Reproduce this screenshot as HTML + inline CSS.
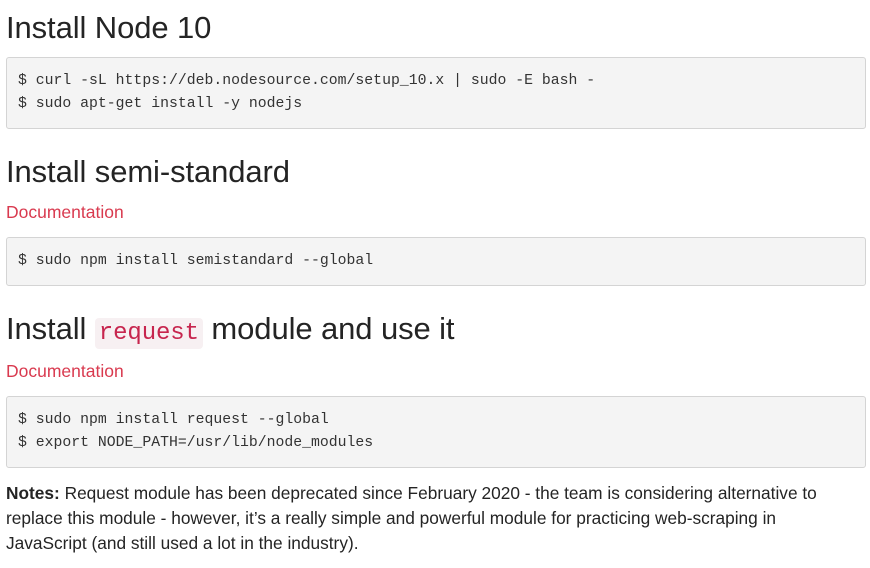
<!DOCTYPE html>
<html><head><meta charset="utf-8"><style>
body{margin:0;background:#fff;width:870px;height:568px;overflow:hidden;font-family:"Liberation Sans",sans-serif;color:#242424}
.h{position:absolute;left:6px;font-size:31px;line-height:34px;color:#242424;white-space:nowrap;letter-spacing:-0.1px}
.box{position:absolute;left:6px;width:860px;background:#f4f4f4;border:1px solid #d4d4d4;border-radius:3px;box-sizing:border-box}
.code{position:absolute;left:18px;font-family:"Liberation Mono",monospace;font-size:14.8px;line-height:23px;color:#333;white-space:pre}
.doc{position:absolute;left:6px;font-size:17.5px;color:#d93a4f;line-height:20px}
.ic{font-family:"Liberation Mono",monospace;color:#c7254e;background:#f7f0f2;border-radius:4px;padding:2px 4px;font-size:24px}
.notes{position:absolute;left:6px;top:481px;width:850px;font-size:17.3px;line-height:25px;color:#242424}
</style></head><body>
<div class="h" style="top:11px">Install Node 10</div>
<div class="box" style="top:57px;height:72px"></div>
<div class="code" style="top:70px">$ curl -sL https://deb.nodesource.com/setup_10.x | sudo -E bash -
$ sudo apt-get install -y nodejs</div>
<div class="h" style="top:155px">Install semi-standard</div>
<div class="doc" style="top:202px">Documentation</div>
<div class="box" style="top:237px;height:49px"></div>
<div class="code" style="top:250px">$ sudo npm install semistandard --global</div>
<div class="h" style="top:312px">Install <span class="ic">request</span> module and use it</div>
<div class="doc" style="top:361px">Documentation</div>
<div class="box" style="top:396px;height:72px"></div>
<div class="code" style="top:409px">$ sudo npm install request --global
$ export NODE_PATH=/usr/lib/node_modules</div>
<div class="notes"><b>Notes:</b> Request module has been deprecated since February 2020 - the team is considering alternative to replace this module - however, it’s a really simple and powerful module for practicing web-scraping in JavaScript (and still used a lot in the industry).</div>
</body></html>
